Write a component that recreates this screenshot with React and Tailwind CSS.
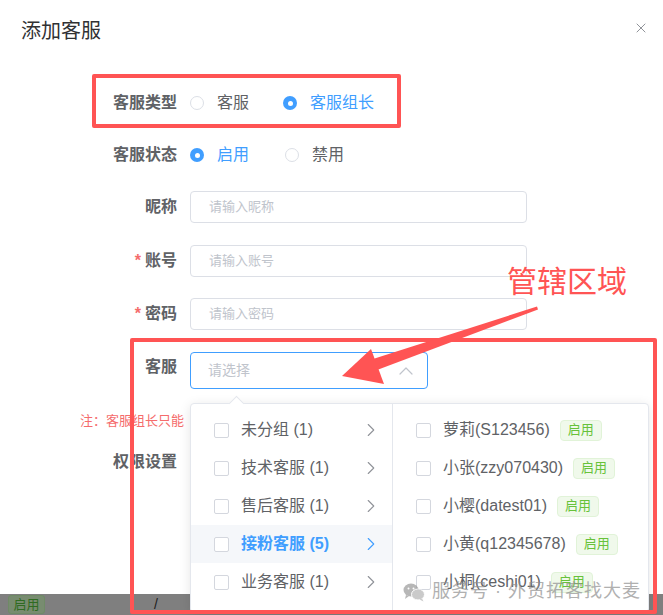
import React from 'react';
import { X, ChevronUp, ChevronRight } from 'lucide-react';

const FONT = { fontFamily: '"Liberation Sans", "Noto Sans CJK SC", sans-serif' };

const Radio = ({ checked, label }) => (
  <div className="flex items-center">
    {checked ? (
      <span className="flex h-[14px] w-[14px] items-center justify-center rounded-full bg-[#409eff]">
        <span className="h-[5px] w-[5px] rounded-full bg-white" />
      </span>
    ) : (
      <span className="h-[14px] w-[14px] rounded-full border border-[#dcdfe6] bg-white" />
    )}
    <span className={`ml-[13px] text-[16px] ${checked ? 'text-[#409eff]' : 'text-[#606266]'}`}>
      {label}
    </span>
  </div>
);

const Label = ({ required, children }) => (
  <div className="w-[190px] shrink-0 pr-[13px] text-right text-[16px] font-bold text-[#606266]">
    {required && <span className="mr-[4px] text-[#f56c6c]">*</span>}
    {children}
  </div>
);

const Checkbox = () => (
  <span className="h-[15px] w-[15px] shrink-0 rounded-[2px] border border-[#d4d7de] bg-white" />
);

const groups = [
  { name: '未分组 (1)' },
  { name: '技术客服 (1)' },
  { name: '售后客服 (1)' },
  { name: '接粉客服 (5)', active: true },
  { name: '业务客服 (1)' },
];

const members = [
  '萝莉(S123456)',
  '小张(zzy070430)',
  '小樱(datest01)',
  '小黄(q12345678)',
  '小桐(ceshi01)',
];

export default function App() {
  return (
    <div className="relative h-[615px] w-[663px] overflow-hidden bg-[#7f7f7f]" style={FONT}>
      {/* Dialog */}
      <div className="h-[594px] bg-white">
        <div className="flex items-center justify-between pl-[21px] pr-[14px] pt-[17px]">
          <span className="text-[20px] leading-[28px] text-[#303133]">添加客服</span>
          <X className="-mt-[6px] h-[16px] w-[16px] text-[#909399]" strokeWidth={1.5} />
        </div>

        <div className="flex flex-col">
          <div className="mt-[38px] flex h-[40px] items-center">
            <Label>客服类型</Label>
            <Radio label="客服" />
            <div className="ml-[34px]">
              <Radio checked label="客服组长" />
            </div>
          </div>

          <div className="mt-[12px] flex h-[40px] items-center">
            <Label>客服状态</Label>
            <Radio checked label="启用" />
            <div className="ml-[36px]">
              <Radio label="禁用" />
            </div>
          </div>

          <div className="mt-[16px] flex h-[32px] items-center">
            <Label>昵称</Label>
            <div className="flex h-[32px] w-[337px] items-center rounded-[4px] border border-[#dcdfe6] px-[18px] text-[13px] text-[#c0c4cc]">
              请输入昵称
            </div>
          </div>

          <div className="mt-[22px] flex h-[32px] items-center">
            <Label required>账号</Label>
            <div className="flex h-[32px] w-[337px] items-center rounded-[4px] border border-[#dcdfe6] px-[18px] text-[13px] text-[#c0c4cc]">
              请输入账号
            </div>
          </div>

          <div className="mt-[21px] flex h-[32px] items-center">
            <Label required>密码</Label>
            <div className="flex h-[32px] w-[337px] items-center rounded-[4px] border border-[#dcdfe6] px-[18px] text-[13px] text-[#c0c4cc]">
              请输入密码
            </div>
          </div>

          <div className="mt-[22px] flex h-[37px] items-start">
            <Label>
              <span className="leading-[30px]">客服</span>
            </Label>
            <div className="flex h-[37px] w-[238px] items-center justify-between rounded-[4px] border border-[#409eff] pl-[17px] pr-[9px] text-[14px] text-[#c0c4cc]">
              请选择
              <ChevronUp className="h-[24px] w-[24px] text-[#c0c4cc]" strokeWidth={1.2} />
            </div>
          </div>

          <div className="ml-[80px] mt-[23px] w-[110px] overflow-hidden whitespace-nowrap text-[13px] leading-[18px] text-[#f56c6c]">
            注：客服组长只能
          </div>

          <div className="mt-[20px] flex h-[24px] items-center">
            <Label>权限设置</Label>
          </div>
        </div>
      </div>

      {/* Backdrop content */}
      <div className="flex h-[21px] items-center">
        <span className="ml-[8px] flex h-[19px] w-[37px] items-center justify-center rounded-[3px] border border-[#6f8a66] bg-[#788c70] text-[13px] text-[#2f6b22]">
          启用
        </span>
        <span className="ml-[109px] text-[14px] text-[#202020]">/</span>
      </div>

      {/* Cascader dropdown */}
      <div className="absolute left-[190px] top-[403px] flex h-[210px] w-[459px] rounded-[4px] border border-[#e4e7ed] bg-white shadow-[0_2px_12px_rgba(0,0,0,0.1)]">
        <span className="absolute -top-[6px] left-[40px] h-[11px] w-[11px] rotate-45 border-l border-t border-[#e4e7ed] bg-white" />
        <div className="w-[202px] border-r border-[#e4e7ed] pt-[7px]">
          {groups.map((g) => (
            <div
              key={g.name}
              className={`flex h-[38px] items-center pl-[23px] pr-[10px] ${g.active ? 'bg-[#f5f7fa]' : ''}`}
            >
              <Checkbox />
              <span
                className={`ml-[12px] flex-1 text-[16px] ${g.active ? 'font-bold text-[#409eff]' : 'text-[#606266]'}`}
              >
                {g.name}
              </span>
              <ChevronRight
                className={`h-[22px] w-[22px] ${g.active ? 'text-[#409eff]' : 'text-[#909399]'}`}
                strokeWidth={1.2}
              />
            </div>
          ))}
        </div>
        <div className="flex-1 pt-[7px]">
          {members.map((m) => (
            <div key={m} className="flex h-[38px] items-center pl-[23px]">
              <Checkbox />
              <span className="ml-[12px] text-[16px] text-[#606266]">{m}</span>
              <span className="ml-[10px] flex h-[21px] items-center rounded-[4px] border border-[#e1f3d8] bg-[#f0f9eb] px-[7px] text-[13px] text-[#67c23a]">
                启用
              </span>
            </div>
          ))}
        </div>
      </div>

      {/* Watermark */}
      <div className="absolute left-[403px] top-[578px] flex items-center opacity-70">
        <svg width="22" height="20" viewBox="0 0 22 20">
          <ellipse cx="8" cy="8" rx="7.5" ry="6.5" fill="#9a9a9a" />
          <path d="M3 13 L2 17 L6 14 Z" fill="#9a9a9a" />
          <ellipse cx="15" cy="12.5" rx="6.5" ry="5.5" fill="#b5b5b5" stroke="#fff" strokeWidth="1" />
          <path d="M19 16.5 L20.5 19.5 L16.5 17.5 Z" fill="#b5b5b5" />
          <circle cx="5.5" cy="6.5" r="1" fill="#fff" />
          <circle cx="10.5" cy="6.5" r="1" fill="#fff" />
        </svg>
        <span className="ml-[7px] text-[18px] tracking-[1px] text-[#8f8f8f]">服务号 · 外贸拓客找大麦</span>
      </div>

      {/* Annotations */}
      <div className="pointer-events-none absolute left-[92px] top-[74px] h-[54px] w-[309px] rounded-[2px] border-[4px] border-[#ff5454]" />
      <div className="pointer-events-none absolute left-[130px] top-[338px] h-[276px] w-[527px] rounded-[2px] border-[4px] border-[#ff5454]" />
      <div className="pointer-events-none absolute left-[507px] top-[262px] text-[30px] leading-[40px] text-[#ff5454]">
        管辖区域
      </div>
      <svg className="pointer-events-none absolute left-0 top-0" width="663" height="615">
        <polygon points="537,306.5 538,309.5 377,370 373,359" fill="#ff5454" />
        <polygon points="342,376 371,349 384,384" fill="#ff5454" />
      </svg>
    </div>
  );
}
